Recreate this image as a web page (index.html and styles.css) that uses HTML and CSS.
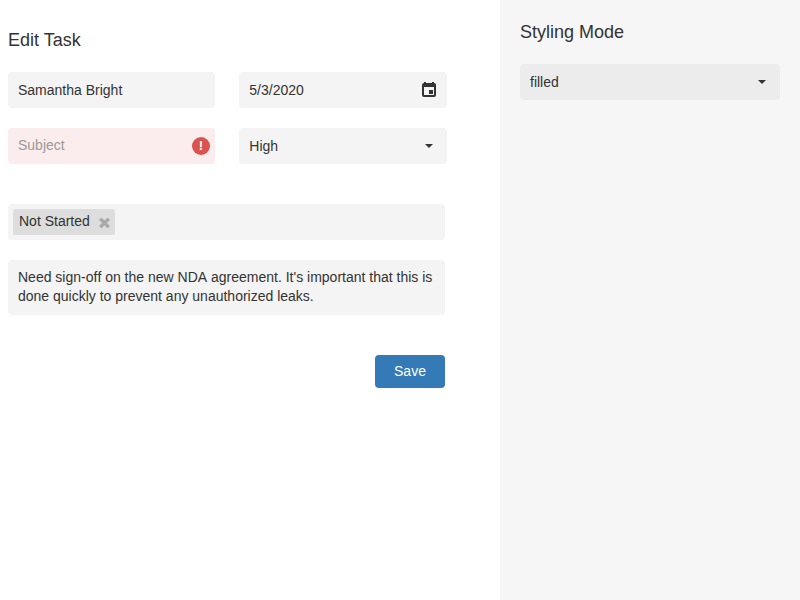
FILE: index.html
```html
<!DOCTYPE html>
<html lang="en">
<head>
<meta charset="utf-8">
<title>Edit Task</title>
<link rel="stylesheet" href="styles.css">
</head>
<body>
<main class="form">
  <h1 class="title">Edit Task</h1>
  <div class="row">
    <div class="field"><span class="text">Samantha Bright</span></div>
    <div class="field"><span class="text">5/3/2020</span>
      <svg class="calendar" width="18" height="18" viewBox="0 0 18 18"><path fill="#333" fill-rule="evenodd" d="M4 1h2v1h6V1h2v1a2 2 0 0 1 2 2v10a2 2 0 0 1-2 2H4a2 2 0 0 1-2-2V4a2 2 0 0 1 2-2zM4 6v8h10V6zM9 9h4v4H9z"/></svg>
    </div>
  </div>
  <div class="row">
    <div class="field invalid"><span class="text">Subject</span><span class="badge">!</span></div>
    <div class="field"><span class="text">High</span>
      <svg class="arrow" width="8" height="4" viewBox="0 0 8 4"><path fill="#333" d="M0 0h8L4 4z"/></svg>
    </div>
  </div>
  <div class="field tags">
    <div class="tag"><span>Not Started</span>
      <svg class="remove" width="11" height="10" viewBox="0 0 11 10"><path stroke="#aaa" stroke-width="3.4" d="M1.2 .7l8.6 8.6M9.8 .7l-8.6 8.6"/></svg>
    </div>
  </div>
  <textarea class="field notes">Need sign-off on the new NDA agreement. It's important that this is done quickly to prevent any unauthorized leaks.</textarea>
  <button class="save">Save</button>
</main>
<aside class="options">
  <h2 class="title">Styling Mode</h2>
  <div class="field"><span class="text">filled</span>
    <svg class="arrow" width="8" height="4" viewBox="0 0 8 4"><path fill="#333" d="M0 0h8L4 4z"/></svg>
  </div>
</aside>
</body>
</html>
```
FILE: styles.css
```css
* { box-sizing: border-box; }
body {
  margin: 0;
  height: 600px;
  display: grid;
  grid-template-columns: 500px 300px;
  font: 14px/19px "Liberation Sans", Arial, sans-serif;
  color: #333;
  background: #fff;
}
.form { padding: 28px 55px 0 8px; }
.options { padding: 20px; background: #f6f6f6; }
.title { margin: 0 0 20px; font-size: 18px; line-height: 24px; font-weight: 400; }
.row {
  display: grid;
  grid-template-columns: 207px 208px;
  column-gap: 24px;
  margin-bottom: 20px;
}
.field {
  display: flex;
  align-items: center;
  height: 36px;
  padding: 0 10px;
  border-radius: 4px;
  background: #f4f4f4;
}
.row .field:last-child { padding-left: 10.3px; }
.text { flex: 1; }
.options .field { background: #ececec; }
.row .invalid { background: #fbeded; color: #999; padding-right: 5px; }
.invalid .text { margin-top: -1px; }
.badge {
  width: 18px;
  height: 18px;
  border-radius: 50%;
  background: #d9534f;
  color: #fff;
  font-weight: 700;
  font-size: 13px;
  line-height: 18px;
  text-align: center;
}
.calendar { margin-right: -1px; }
.arrow { margin-right: 4px; }
.tags { margin: 40px 0 20px; padding: 0 5px; }
.tag {
  display: flex;
  align-items: center;
  gap: 9px;
  height: 26px;
  padding: 0 5px 1px 6px;
  border-radius: 2px;
  background: #ddd;
}
.remove { margin-top: 2px; }
.notes {
  display: block;
  width: 100%;
  height: 55px;
  padding: 8px 10px;
  border: 0;
  outline: 0;
  resize: none;
  overflow: hidden;
  font: inherit;
  color: inherit;
  font-kerning: none;
}
.save {
  display: block;
  width: 70px;
  height: 33px;
  margin: 40px 0 0 auto;
  padding: 0;
  border: 0;
  border-radius: 4px;
  background: #337ab7;
  color: #fff;
  font: inherit;
}
```
